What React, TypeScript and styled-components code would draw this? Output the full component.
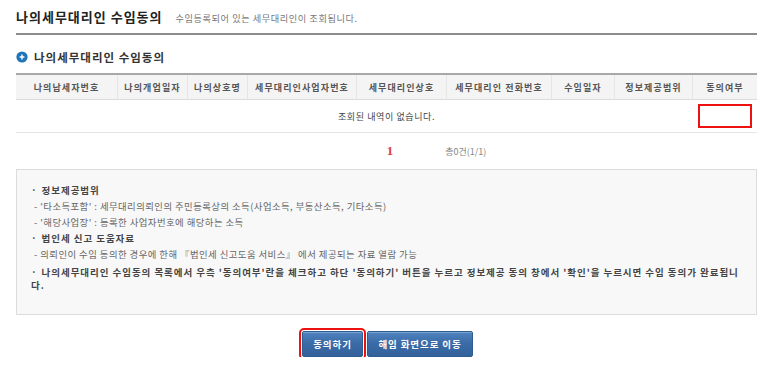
import React from "react";
import styled, { createGlobalStyle } from "styled-components";

const GlobalStyle = createGlobalStyle`
  html, body { margin: 0; padding: 0; background: #ffffff; }
  body { font-family: "Noto Sans CJK KR", "Noto Sans", sans-serif; color: #333; }
`;

const Page = styled.div`
  padding: 8px 16px 0 16px;
  width: 741px;
`;

const TitleRow = styled.div`
  display: flex;
  align-items: baseline;
  gap: 13px;
  height: 25px;
  border-bottom: 2px solid #8c8c8c;
`;

const Title = styled.h1`
  margin: 0;
  font-size: 13px;
  line-height: 17px;
  font-weight: 700;
  color: #222;
  letter-spacing: 1px;
`;

const SubTitle = styled.span`
  font-size: 9.2px;
  color: #777;
  letter-spacing: 0.55px;
`;

const SectionHead = styled.div`
  display: flex;
  align-items: center;
  gap: 6px;
  margin-top: 15px;
  height: 14px;
`;

const SectionTitle = styled.h2`
  margin: 0;
  font-size: 11.5px;
  line-height: 14px;
  font-weight: 700;
  color: #333;
  letter-spacing: 1px;
`;

const Table = styled.div`
  margin-top: 9px;
  border-top: 2px solid #a8a8a8;
  display: grid;
  grid-template-columns: 102px 70px 60px 109px 90px 105px 63px 78px 64px;
`;

const HeadCell = styled.div<{ $last?: boolean }>`
  height: 24px;
  background: #f4f4f4;
  border-bottom: 1px solid #dcdcdc;
  border-right: ${(p) => (p.$last ? "none" : "1px solid #e6e6e6")};
  display: flex;
  align-items: center;
  justify-content: center;
  font-size: 9px;
  font-weight: 700;
  color: #555;
  letter-spacing: 1.1px;
  white-space: nowrap;
`;

const EmptyCell = styled.div`
  grid-column: 1 / -1;
  position: relative;
  height: 32px;
  border-bottom: 1px solid #e4e4e4;
  display: flex;
  align-items: center;
  justify-content: center;
  font-size: 9px;
  color: #444;
  letter-spacing: 0.6px;
`;

const Highlight = styled.span`
  position: absolute;
  right: 5px;
  top: 4px;
  width: 50px;
  height: 20px;
  border: 2px solid #ee1111;
`;

const Pager = styled.div`
  display: grid;
  grid-template-columns: 1fr auto 1fr;
  align-items: center;
  height: 36px;
  padding-left: 7px;
`;

const PageNum = styled.span`
  grid-column: 2;
  font-family: "Liberation Serif", serif;
  font-size: 13px;
  font-weight: 700;
  color: #d84040;
`;

const Total = styled.span`
  grid-column: 3;
  padding-left: 52px;
  font-size: 9px;
  color: #888;
`;

const InfoBox = styled.div`
  border: 1px solid #dcdcdc;
  background: #f8f8f8;
  padding: 14px 12px 20px 14px;
  height: 110px;
`;

const Bullet = styled.p<{ $gap?: number }>`
  margin: ${(p) => p.$gap ?? 0}px 0 0 0;
  font-size: 9.5px;
  line-height: 13px;
  font-weight: 700;
  color: #444;
  letter-spacing: 0.95px;
  word-break: break-all;
  &::before {
    content: "·";
    margin-right: 4px;
    font-weight: 700;
  }
`;

const Sub = styled.p`
  margin: 2px 0 0 3px;
  font-size: 9.4px;
  line-height: 14px;
  color: #666;
  letter-spacing: 0.45px;
`;

const Buttons = styled.div`
  display: flex;
  justify-content: center;
  gap: 4px;
  margin-top: 16px;
  padding-left: 2px;
`;

const Button = styled.button<{ $w: number; $marked?: boolean }>`
  width: ${(p) => p.$w}px;
  height: 26px;
  border: 1px solid #2e5d92;
  border-radius: 2px;
  background: linear-gradient(#5083c0, #3b6ca7 45%, #33629b);
  color: #ffffff;
  font-family: "Noto Sans CJK KR", sans-serif;
  font-size: 9.5px;
  font-weight: 700;
  letter-spacing: 0.9px;
  padding: 0;
  box-shadow: inset 0 1px 0 rgba(255, 255, 255, 0.25);
  outline: ${(p) => (p.$marked ? "2px solid #ee1111" : "none")};
  outline-offset: 1px;
`;

const Icon = () => (
  <svg width="12" height="12" viewBox="0 0 12 12" aria-hidden>
    <circle cx="6" cy="6" r="5.6" fill="#1f73b7" />
    <path d="M3.6 6h4.8M6 3.6v4.8" stroke="#fff" strokeWidth="1.4" />
  </svg>
);

const heads = [
  "나의납세자번호",
  "나의개업일자",
  "나의상호명",
  "세무대리인사업자번호",
  "세무대리인상호",
  "세무대리인 전화번호",
  "수임일자",
  "정보제공범위",
  "동의여부",
];

export default function App() {
  return (
    <>
      <GlobalStyle />
      <Page>
        <TitleRow>
          <Title>나의세무대리인 수임동의</Title>
          <SubTitle>수임등록되어 있는 세무대리인이 조회됩니다.</SubTitle>
        </TitleRow>
        <SectionHead>
          <Icon />
          <SectionTitle>나의세무대리인 수임동의</SectionTitle>
        </SectionHead>
        <Table>
          {heads.map((h, i) => (
            <HeadCell key={h} $last={i === heads.length - 1}>
              {h}
            </HeadCell>
          ))}
          <EmptyCell>
            조회된 내역이 없습니다.
            <Highlight />
          </EmptyCell>
        </Table>
        <Pager>
          <PageNum>1</PageNum>
          <Total>총0건(1/1)</Total>
        </Pager>
        <InfoBox>
          <Bullet>정보제공범위</Bullet>
          <Sub>- '타소득포함' : 세무대리의뢰인의 주민등록상의 소득(사업소득, 부동산소득, 기타소득)</Sub>
          <Sub>- '해당사업장' : 등록한 사업자번호에 해당하는 소득</Sub>
          <Bullet $gap={3}>법인세 신고 도움자료</Bullet>
          <Sub>- 의뢰인이 수임 동의한 경우에 한해 『법인세 신고도움 서비스』 에서 제공되는 자료 열람 가능</Sub>
          <Bullet $gap={5}>
            나의세무대리인 수임동의 목록에서 우측 '동의여부'란을 체크하고 하단 '동의하기' 버튼을 누르고 정보제공 동의 창에서 '확인'을 누르시면 수임 동의가 완료됩니다.
          </Bullet>
        </InfoBox>
        <Buttons>
          <Button $w={61} $marked>
            동의하기
          </Button>
          <Button $w={106}>해임 화면으로 이동</Button>
        </Buttons>
      </Page>
    </>
  );
}
